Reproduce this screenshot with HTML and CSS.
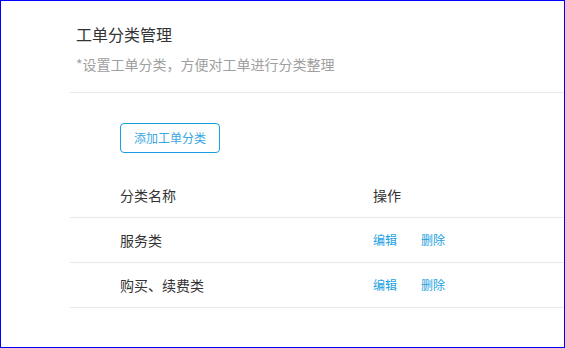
FILE: index.html
```html
<!DOCTYPE html>
<html lang="zh-CN">
  <head>
    <meta charset="UTF-8" />
    <meta name="viewport" content="width=device-width, initial-scale=1.0" />
    <title>工单分类管理</title>
    <link rel="stylesheet" href="styles.css">
  </head>
  <body>
    <div class="page">
      <div class="page-head">
        <h1 class="page-title">工单分类管理</h1>
        <p class="page-desc">*设置工单分类，方便对工单进行分类整理</p>
      </div>

      <button class="btn-add" type="button">添加工单分类</button>

      <div class="table">
        <div class="row row-head">
          <div class="cell cell-name">分类名称</div>
          <div class="cell">操作</div>
        </div>
        <div class="row">
          <div class="cell cell-name">服务类</div>
          <div class="cell cell-ops">
            <a class="link" href="#">编辑</a>
            <a class="link" href="#">删除</a>
          </div>
        </div>
        <div class="row">
          <div class="cell cell-name">购买、续费类</div>
          <div class="cell cell-ops">
            <a class="link" href="#">编辑</a>
            <a class="link" href="#">删除</a>
          </div>
        </div>
      </div>
    </div>
  </body>
</html>
```

FILE: styles.css
```css
* {
  margin: 0;
  padding: 0;
  box-sizing: border-box;
  font-family: "Noto Sans CJK SC", "Noto Sans", sans-serif;
}
html,
body {
  overflow: hidden;
}
body {
  width: 565px;
  height: 348px;
  border: 1px solid #0000ff;
  background: #fff;
  color: #333;
}
.page {
  padding-left: 69px;
}
.page-head {
  padding: 22px 0 18px 6px;
  border-bottom: 1px solid #e8e8e8;
}
.page-title {
  font-size: 16px;
  font-weight: normal;
  line-height: 22px;
  color: #333;
}
.page-desc {
  margin-top: 9px;
  font-size: 14px;
  line-height: 20px;
  color: #a0a0a0;
}
.btn-add {
  display: block;
  width: 100px;
  height: 30px;
  margin: 30px 0 20px 50px;
  border: 1px solid #1a9fe0;
  border-radius: 4px;
  background: #fff;
  color: #3aa6e0;
  font-size: 12px;
  line-height: 28px;
  cursor: pointer;
}
.row {
  display: grid;
  grid-template-columns: 303px 1fr;
  height: 45px;
  border-bottom: 1px solid #e8e8e8;
  align-items: center;
}
.cell {
  font-size: 14px;
  line-height: 20px;
  color: #333;
}
.cell-name {
  padding-left: 50px;
}
.cell-ops {
  display: flex;
  gap: 24px;
}
.link {
  font-size: 12px;
  color: #1a9fe0;
  text-decoration: none;
}
```
